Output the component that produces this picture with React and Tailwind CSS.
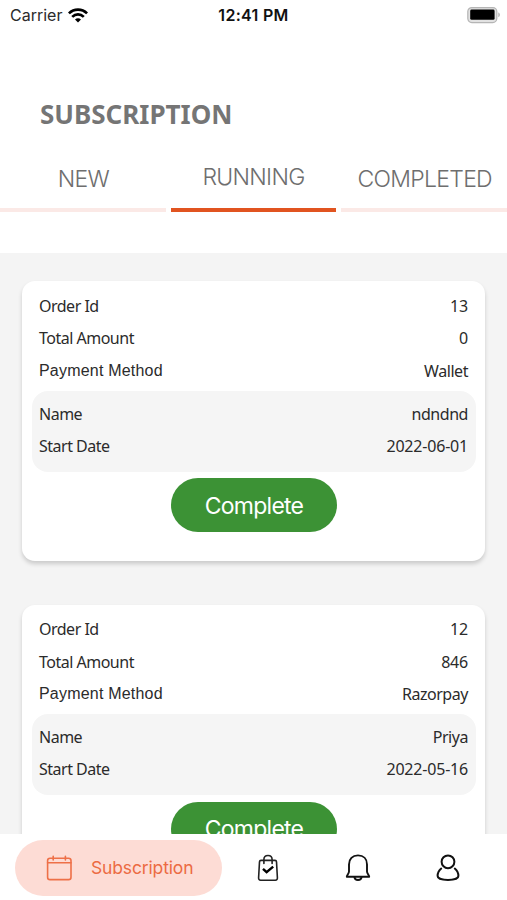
import React from 'react';

const orders = [
    { id: '13', amount: '0', method: 'Wallet', name: 'ndndnd', start: '2022-06-01' },
    { id: '12', amount: '846', method: 'Razorpay', name: 'Priya', start: '2022-05-16' },
];

const WifiIcon = () => (
    <svg width="20" height="15" viewBox="0 0 20 15" fill="none" stroke="#000" strokeWidth="2.7">
        <path d="M0.9 5.4C6 0.4 14 0.4 19.1 5.4" />
        <path d="M4.2 8.9C7.6 5.6 12.4 5.6 15.8 8.9" />
        <path d="M10 14.4L7 11.4C8.7 9.9 11.3 9.9 13 11.4Z" fill="#000" stroke="none" />
    </svg>
);

const BatteryIcon = () => (
    <svg width="34" height="17" viewBox="0 0 34 17">
        <rect x="0.8" y="0.6" width="29" height="15" rx="4" fill="#e2e2e2" stroke="#b5b5b5" strokeWidth="1.2" />
        <rect x="3.2" y="2.6" width="24.4" height="10.2" rx="1.4" fill="#000" />
        <path d="M31.4 5.6C33.2 6.2 33.2 9.6 31.4 10.2Z" fill="#aaa" />
    </svg>
);

const CalendarIcon = () => (
    <svg width="26" height="26" viewBox="0 0 26 26" fill="none" stroke="#ee7048" strokeWidth="1.6" strokeLinecap="round">
        <rect x="1.6" y="3.2" width="23.4" height="21.4" rx="2.4" />
        <path d="M1.6 7.8H25M7.2 1.2V5M19.4 1.2V5" />
    </svg>
);

const BagIcon = () => (
    <svg width="22" height="28" viewBox="0 0 22 28" fill="none" stroke="#222" strokeWidth="1.6" strokeLinecap="round" strokeLinejoin="round">
        <path d="M4 6.4H18Q19.4 6.4 19.5 7.8L20.4 23.8Q20.5 26.2 18.4 26.2H3.6Q1.5 26.2 1.6 23.8L2.5 7.8Q2.6 6.4 4 6.4Z" />
        <path d="M6.9 9.4V5.6C6.9 0.2 15.1 0.2 15.1 5.6V9.4" />
        <path d="M6 14.8L9.6 18.2L16.2 12.6" stroke="#000" strokeWidth="2.4" strokeLinecap="butt" strokeLinejoin="miter" />
    </svg>
);

const BellIcon = () => (
    <svg width="26" height="28" viewBox="0 0 26 28" fill="none" stroke="#111" strokeWidth="1.9" strokeLinejoin="round">
        <path d="M13 1.4C7.4 1.4 4 5 4 10.4V17.4C4 19.6 1.8 21 1.8 22.7H24.2C24.2 21 22 19.6 22 17.4V10.4C22 5 18.6 1.4 13 1.4Z" />
        <path d="M9.4 22.8C9.8 27 16.2 27 16.6 22.8" />
    </svg>
);

const UserIcon = () => (
    <svg width="24" height="28" viewBox="0 0 24 28" fill="none" stroke="#111" strokeWidth="2" strokeLinecap="round">
        <circle cx="12" cy="7.8" r="6.4" />
        <path d="M5.2 14.6C2.6 16.8 1.6 19.5 1.6 22C1.6 27.2 22.4 27.2 22.4 22C22.4 19.5 21.4 16.8 18.8 14.6" />
    </svg>
);

const Row = ({ label, value, numeric, labelClass = 'tracking-[-0.5px]' }) => (
    <div className="flex h-[32.3px] items-center justify-between pl-[7px] pr-2 text-[16px]">
        <span className={labelClass}>{label}</span>
        <span className={numeric ? 'tracking-[-0.2px]' : 'tracking-[-0.45px]'}>{value}</span>
    </div>
);

const OrderCard = ({ order }) => (
    <div className="h-[280px] shrink-0 rounded-[13px] bg-white pl-[10px] pr-[9px] pt-[8.5px] shadow-[0_3px_4px_rgba(0,0,0,0.17)]">
        <Row label="Order Id" value={order.id} numeric />
        <Row label="Total Amount" value={order.amount} numeric />
        <Row
            label="Payment Method"
            value={order.method}
            labelClass="font-['Liberation_Sans',sans-serif] tracking-[0.2px] pt-px"
        />
        <div className="mt-1 rounded-[16px] bg-[#f5f5f5] pt-[7px] pb-[9.4px]">
            <Row label="Name" value={order.name} />
            <Row label="Start Date" value={order.start} numeric />
        </div>
        <button className="mx-auto mt-[6.6px] flex h-[54px] w-[166px] items-center justify-center rounded-[27px] bg-[#3c9235] pt-px font-['Inter',sans-serif] text-[23px] tracking-[-0.75px] text-white">
            Complete
        </button>
    </div>
);

const Tab = ({ label, active }) => (
    <button className="flex flex-1 flex-col items-center">
        <span className={`flex h-[64px] w-full items-center justify-center text-[23px] leading-[28px] font-light tracking-[-0.7px] text-[#6e6e6e] ${active ? 'pt-px' : 'pt-[5px] pl-px'}`}>
            {label}
        </span>
        <span className={`h-1 w-full ${active ? 'bg-[#e15420]' : 'bg-[#fbe9e6]'}`} />
    </button>
);

const App = () => {
    return (
        <div className="flex h-[900px] w-[507px] flex-col overflow-hidden bg-white font-['Noto_Sans',sans-serif] text-[#2b2b2b]">
            <header className="h-[253px] shrink-0">
                <div className="grid h-[30px] grid-cols-3 items-center px-[6px] font-['Inter',sans-serif] text-[16px]">
                    <div className="flex items-center gap-[6px] pl-1">
                        <span>Carrier</span>
                        <WifiIcon />
                    </div>
                    <span className="text-center font-semibold tracking-[0.3px] text-[#111]">12:41 PM</span>
                    <div className="flex justify-end">
                        <BatteryIcon />
                    </div>
                </div>
                <h1 className="mt-[66px] pl-10 text-[26px] leading-[36px] font-bold text-[#757575]">SUBSCRIPTION</h1>
                <div className="mt-3 flex gap-[5px] font-['Inter',sans-serif]">
                    <Tab label="NEW" />
                    <Tab label="RUNNING" active />
                    <Tab label="COMPLETED" />
                </div>
            </header>

            <main className="flex min-h-0 flex-1 flex-col gap-[43.2px] overflow-hidden bg-[#f4f4f4] px-[22px] pt-[28.4px]">
                {orders.map((order) => (
                    <OrderCard key={order.id} order={order} />
                ))}
            </main>

            <nav className="flex h-[66px] shrink-0 items-center bg-white pl-[15px] pt-[2px] font-['Inter',sans-serif]">
                <button className="flex h-14 w-[207px] items-center gap-[19px] rounded-full bg-[#fddcd5] pl-[31px] text-[17.5px] text-[#ec6b43]">
                    <CalendarIcon />
                    <span className="pt-px tracking-[-0.15px]">Subscription</span>
                </button>
                <div className="flex">
                    <button className="flex w-[91px] justify-center"><BagIcon /></button>
                    <button className="flex w-[89px] justify-center"><BellIcon /></button>
                    <button className="flex w-[91px] justify-center"><UserIcon /></button>
                </div>
            </nav>
        </div>
    );
};

export default App;
